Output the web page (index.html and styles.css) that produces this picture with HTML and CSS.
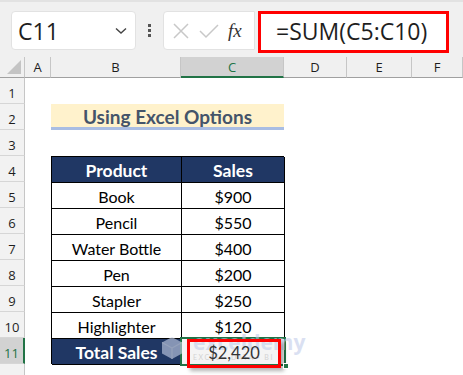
FILE: index.html
```html
<!DOCTYPE html>
<html lang="en">
<head>
  <meta charset="UTF-8">
  <title>Using Excel Options</title>
  <link rel="stylesheet" href="styles.css">
</head>
<body>

  <div class="toolbar">
    <div class="namebox">
      <span>C11</span>
      <svg class="chevron" width="12" height="8" viewBox="0 0 12 8"><path d="M1 1.5 L6 6 L11 1.5" fill="none" stroke="#444" stroke-width="1.4"/></svg>
    </div>
    <div class="dots"><i></i><i></i><i></i></div>
    <div class="fxbox">
      <svg width="18" height="18" viewBox="0 0 18 18"><path d="M2 2 L16 16 M16 2 L2 16" stroke="#c8c8c8" stroke-width="1.5"/></svg>
      <svg width="20" height="16" viewBox="0 0 20 16"><path d="M1 8 L7 14 L19 2" fill="none" stroke="#c8c8c8" stroke-width="1.5"/></svg>
      <span class="fx">fx</span>
    </div>
    <div class="formula">=SUM(C5:C10)</div>
  </div>

  <div class="sheet">
    <div class="corner"><svg width="14" height="14" viewBox="0 0 14 14"><path d="M14 0 L14 14 L0 14 Z" fill="#c4c4c4"/></svg></div>
    <div class="col-head">A</div>
    <div class="col-head">B</div>
    <div class="col-head active">C</div>
    <div class="col-head">D</div>
    <div class="col-head">E</div>
    <div class="col-head">F</div>

    <div class="row-head r1">1</div>
    <div class="row-head r2">2</div>
    <div class="row-head r3">3</div>
    <div class="row-head r4">4</div>
    <div class="row-head r5">5</div>
    <div class="row-head r6">6</div>
    <div class="row-head r7">7</div>
    <div class="row-head r8">8</div>
    <div class="row-head r9">9</div>
    <div class="row-head r10">10</div>
    <div class="row-head r11 active">11</div>
    <div class="row-head r12"></div>

    <div class="title">Using Excel Options</div>

    <div class="sales">
      <div class="th">Product</div>
      <div class="th">Sales</div>
      <div class="td">Book</div><div class="td">$900</div>
      <div class="td">Pencil</div><div class="td">$550</div>
      <div class="td">Water Bottle</div><div class="td">$400</div>
      <div class="td">Pen</div><div class="td">$200</div>
      <div class="td">Stapler</div><div class="td">$250</div>
      <div class="td">Highlighter</div><div class="td">$120</div>
      <div class="th total">Total Sales</div>
      <div class="td selected">
        <div class="watermark">
          <svg width="22" height="24" viewBox="0 0 22 24"><path d="M11 1 L21 6.5 L21 17.5 L11 23 L1 17.5 L1 6.5 Z" fill="#c9d3ea"/><path d="M11 12 L21 6.5 M11 12 L1 6.5 M11 12 L11 23" stroke="#e4e9f5" stroke-width="1.2"/></svg>
          <div>
            <span class="wm-name">exceldemy</span>
            <span class="wm-tag">EXCEL · DATA · BI</span>
          </div>
        </div>
        <div class="redbox">$2,420</div>
        <div class="handle"></div>
      </div>
    </div>
  </div>

</body>
</html>
```

FILE: styles.css
```css
* {
  margin: 0;
  padding: 0;
  box-sizing: border-box;
}
body {
  width: 463px;
  height: 375px;
  overflow: hidden;
  background: #fff;
  font-family: 'Open Sans', 'Liberation Sans', sans-serif;
  color: #000;
}

/* formula bar */
.toolbar {
  height: 57px;
  background: #f0f0f0;
  border-top: 2px solid #e2e2e2;
  display: flex;
  align-items: flex-start;
  padding: 9px 0 0 11px;
}
.namebox {
  width: 125px;
  height: 39px;
  background: #fff;
  border: 1px solid #e2e2e2;
  border-radius: 4px;
  display: flex;
  align-items: center;
  justify-content: space-between;
  padding: 0 8px 0 6px;
  font-size: 23px;
  color: #1e1e1e;
}
.dots {
  width: 27px;
  height: 39px;
  display: flex;
  flex-direction: column;
  align-items: center;
  justify-content: center;
  gap: 2px;
}
.dots i {
  width: 3px;
  height: 3px;
  background: #555;
}
.fxbox {
  width: 92px;
  height: 39px;
  background: #fff;
  border: 1px solid #e2e2e2;
  border-radius: 4px 0 0 4px;
  display: flex;
  align-items: center;
  gap: 9px;
  padding-left: 8px;
}
.fx {
  font-family: 'Liberation Serif', serif;
  font-style: italic;
  font-size: 19px;
  color: #333;
}
.formula {
  width: 191px;
  height: 42px;
  margin-left: 3px;
  background: #fff;
  border: 3px solid #f00;
  font-size: 23px;
  color: #1e1e1e;
  padding-left: 15px;
  line-height: 35px;
}

/* sheet grid */
.sheet {
  display: grid;
  grid-template-columns: 25px 26px 130px 103px 63px 65px 1fr;
  grid-template-rows: 21px repeat(12, 26px);
}
.corner {
  background: #f0f0f0;
  border-right: 1px solid #c6c6c6;
  border-bottom: 1px solid #a0a0a0;
  display: flex;
  align-items: flex-end;
  justify-content: flex-end;
  padding: 0 3px 3px 0;
}
.col-head {
  background: #f0f0f0;
  border-right: 1px solid #c6c6c6;
  border-bottom: 1px solid #a0a0a0;
  font-size: 13px;
  text-align: center;
  line-height: 20px;
  color: #1e1e1e;
}
.col-head.active {
  background: #d2d2d2;
  border-bottom: 2px solid #217346;
  color: #217346;
}
.row-head {
  grid-column: 1;
  background: #f2f2f2;
  border-right: 1px solid #c6c6c6;
  border-bottom: 1px solid #d6d6d6;
  font-size: 13px;
  text-align: center;
  line-height: 30px;
  color: #1e1e1e;
}
.row-head.active {
  background: #d2d2d2;
  border-right: 2px solid #217346;
  color: #217346;
}
.r1 { grid-row: 2; }
.r2 { grid-row: 3; }
.r3 { grid-row: 4; }
.r4 { grid-row: 5; }
.r5 { grid-row: 6; }
.r6 { grid-row: 7; }
.r7 { grid-row: 8; }
.r8 { grid-row: 9; }
.r9 { grid-row: 10; }
.r10 { grid-row: 11; }
.r11 { grid-row: 12; }
.r12 { grid-row: 13; }

.title {
  grid-column: 3 / 5;
  grid-row: 3;
  background: #fff2cc;
  border-bottom: 3px solid #a9bde3;
  font-family: 'Lato', sans-serif;
  font-weight: bold;
  font-size: 19px;
  color: #44546a;
  text-align: center;
  line-height: 25px;
}

/* product table */
.sales {
  grid-column: 3 / 5;
  grid-row: 5 / 13;
  display: grid;
  grid-template-columns: 130px 103px;
  grid-template-rows: repeat(8, 26px);
  border-top: 1px solid #000;
  border-left: 1px solid #000;
  font-family: 'Lato', sans-serif;
}
.th, .td {
  border-right: 1px solid #000;
  border-bottom: 1px solid #000;
  text-align: center;
  line-height: 27px;
}
.th {
  background: #203764;
  color: #fff;
  font-weight: bold;
  font-size: 17.5px;
}
.td {
  font-size: 16px;
  color: #000;
}
.td.selected {
  position: relative;
  background: #f4f4f4;
}
.td.selected::before {
  content: '';
  position: absolute;
  left: -2px;
  top: -2px;
  right: -2px;
  bottom: -2px;
  border: 2px solid #217346;
}
.redbox {
  position: absolute;
  left: 5px;
  top: 0;
  width: 94px;
  height: 29px;
  border: 3px solid #f00;
  box-shadow: 3px 3px 4px rgba(0, 0, 0, 0.3);
  color: #333;
  line-height: 23px;
  font-size: 16.5px;
}
.handle {
  position: absolute;
  right: -5px;
  bottom: -5px;
  width: 6px;
  height: 6px;
  background: #217346;
  border: 1px solid #fff;
}
.watermark {
  position: absolute;
  left: -21px;
  top: -6px;
  display: flex;
  align-items: center;
  gap: 10px;
  opacity: 0.6;
  text-align: left;
}
.wm-name {
  display: block;
  font-family: 'Open Sans', sans-serif;
  font-weight: bold;
  font-size: 21px;
  line-height: 18px;
  color: #c2cdeb;
}
.wm-tag {
  display: block;
  font-size: 7px;
  line-height: 12px;
  letter-spacing: 1.5px;
  color: #bdbdbd;
}
```
